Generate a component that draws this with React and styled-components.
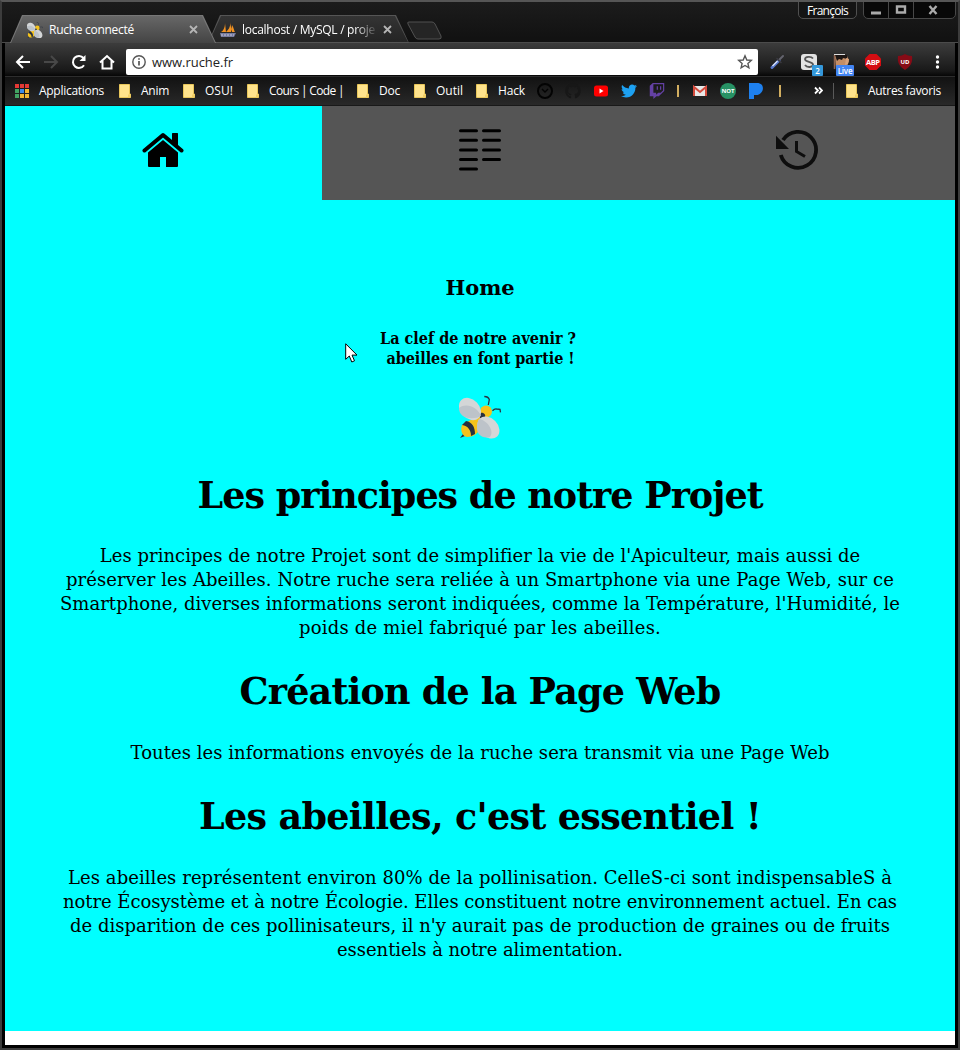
import React, { useLayoutEffect, useRef, useState } from "react";
import styled, { createGlobalStyle } from "styled-components";
import { FaTwitter, FaTwitch, FaGithub } from "react-icons/fa";

const GlobalStyle = createGlobalStyle`
  * { box-sizing: border-box; }
  body { margin: 0; background: #000; }
`;

const Window = styled.div`
  position: relative;
  width: 960px;
  height: 1050px;
  display: flex;
  flex-direction: column;
  padding: 0 3px 3px;
  background: #000;
  border: 2px solid #3c3c3c;
  border-top-color: #565656;
  font-family: "Open Sans", "Noto Sans", sans-serif;
  font-size: 12px;
  color: #fff;
  overflow: hidden;
`;

const Fitted = styled.span`
  display: inline-block;
  white-space: pre;
  flex: none;
`;

/* Spreads or tightens the letters so that the text fills the given width. */
function Fit({ width, children }) {
  const ref = useRef(null);
  const [spacing, setSpacing] = useState(0);
  useLayoutEffect(() => {
    const natural = ref.current.getBoundingClientRect().width;
    setSpacing((width - natural) / children.length);
  }, [width, children]);
  return (
    <Fitted ref={ref} style={{ letterSpacing: spacing }}>
      {children}
    </Fitted>
  );
}

/* ---------- title bar ---------- */

const TitleBar = styled.div`
  height: 41px;
  flex: none;
  margin: 0 -3px;
  padding: 13px 0 0 8px;
  display: flex;
  background: linear-gradient(#1c1c1c, #111);
  border-bottom: 1px solid #4b4b4b;
`;

const Tab = styled.div`
  position: relative;
  width: ${(p) => p.$width}px;
  height: 28px;
  flex: none;
  margin-left: ${(p) => p.$shift || 0}px;
  padding: 1px 0 0 ${(p) => p.$inset}px;
  display: flex;
  align-items: center;
  isolation: isolate;
  z-index: ${(p) => (p.$active ? 2 : 1)};
  &::before, &::after {
    content: "";
    position: absolute;
    z-index: -1;
    inset: 0;
    background: ${(p) => (p.$active ? "#777" : "#555")};
    clip-path: polygon(12px 0, calc(100% - 13px) 0, 100% 100%, 0 100%);
  }
  &::after {
    inset: 1px 1px ${(p) => (p.$active ? 0 : 1)}px;
    background: ${(p) => (p.$active ? "linear-gradient(#676767, #444)" : "linear-gradient(#343434, #242424)")};
  }
`;

const TabTitle = styled.div`
  width: ${(p) => p.$width}px;
  margin-left: 6px;
  line-height: 20px;
  ${(p) => p.$fade && "mask-image: linear-gradient(90deg, #000 84%, rgba(0, 0, 0, 0.1));"}
`;

const Close = styled.svg`
  width: 9px;
  height: 9px;
  flex: none;
  margin-left: ${(p) => p.$gap}px;
  stroke: #b5b5b5;
  stroke-width: 1.8;
`;

const NewTab = styled.svg`
  width: 36px;
  height: 19px;
  margin: 6px 0 0 -3px;
  fill: #252525;
  stroke: #515151;
`;

const UserBadge = styled.div`
  position: absolute;
  left: 796px;
  top: -1px;
  width: 59px;
  height: 18px;
  display: flex;
  justify-content: center;
  border: 1px solid #505050;
  border-radius: 0 0 5px 5px;
  background: #141414;
  line-height: 17px;
`;

const WindowButtons = styled.div`
  position: absolute;
  left: 861px;
  top: -1px;
  height: 18px;
  display: flex;
  border: 1px solid #484848;
  border-radius: 0 0 5px 5px;
  background: #080808;
  overflow: hidden;
`;

const WindowButton = styled.div`
  width: ${(p) => p.$width}px;
  display: flex;
  align-items: center;
  justify-content: center;
  padding-right: ${(p) => p.$trim || 1}px;
  & + & { border-left: 1px solid #484848; }
  svg { width: 12px; height: 12px; fill: none; stroke: #aaa; stroke-width: 2.4; }
`;

/* ---------- toolbar ---------- */

const Toolbar = styled.div`
  height: 33px;
  flex: none;
  display: flex;
  align-items: center;
  padding: 5px 9px 0 10px;
  background: linear-gradient(#3c3c3c, #181818 85%, #060606);
`;

const NavIcon = styled.svg`
  width: 16px;
  height: 16px;
  flex: none;
  margin-right: 12px;
  fill: none;
  stroke: ${(p) => (p.$dim ? "#484848" : "#fff")};
  stroke-width: 2;
`;

const AddressBar = styled.div`
  width: 632px;
  height: 26px;
  margin-left: -1px;
  padding: 0 6px;
  display: flex;
  align-items: center;
  border-radius: 2px;
  background: #fff;
  color: #222;
  font-size: 13px;
  flex: none;
`;

const InfoIcon = styled.svg`
  width: 14px;
  height: 14px;
  margin-right: 6px;
  fill: none;
  stroke: #555;
  stroke-width: 1.4;
`;

const StarIcon = styled.svg`
  width: 16px;
  height: 16px;
  margin-left: auto;
  margin-right: -1px;
  fill: none;
  stroke: #555;
  stroke-width: 1.4;
`;

const Extensions = styled.div`
  flex: 1;
  display: flex;
  align-items: center;
  justify-content: space-between;
  padding-left: 10px;
`;

const Extension = styled.div`
  position: relative;
  width: 18px;
  height: 18px;
  svg { display: block; width: 18px; height: 18px; }
`;

const Count = styled.span`
  position: absolute;
  left: ${(p) => p.$left}px;
  top: 12px;
  width: ${(p) => p.$width}px;
  height: 11px;
  border-radius: 1px;
  background: ${(p) => p.$color};
  font: 600 8px/11px "Open Sans", sans-serif;
  letter-spacing: -0.2px;
  text-align: center;
`;

/* ---------- bookmarks ---------- */

const Bookmarks = styled.div`
  height: 30px;
  flex: none;
  display: flex;
  align-items: center;
  padding-left: 10px;
  border-top: 1px solid #2d2d2d;
  border-bottom: 1px solid #191919;
  background: linear-gradient(#121212, #292929);
`;

const Bookmark = styled.div`
  width: ${(p) => p.$width}px;
  flex: none;
  display: flex;
  align-items: center;
  gap: 10px;
  line-height: 20px;
`;

const BookmarkIcon = styled.div`
  width: ${(p) => p.$width || 28}px;
  height: 16px;
  flex: none;
  display: flex;
  align-items: center;
  justify-content: center;
  color: ${(p) => p.$color};
  svg { width: 16px; height: 16px; }
`;

const Overflow = styled.div`
  width: 42px;
  height: 16px;
  flex: none;
  padding: 3px 0 0 23px;
  svg { display: block; width: 9px; height: 9px; fill: none; stroke: #fff; stroke-width: 1.8; }
`;

const FolderSvg = styled.svg`
  width: 12px;
  height: 14px;
  flex: none;
`;

const AppsGrid = styled.div`
  display: grid;
  grid-template-columns: repeat(3, 4px);
  grid-auto-rows: 4px;
  gap: 1px;
`;

const AppDot = styled.i`
  background: ${(p) => p.$color};
`;

const Bar = styled.i`
  width: 2px;
  height: 12px;
  background: #d2ae60;
`;

const Separator = styled.i`
  width: 1px;
  height: 16px;
  flex: none;
  margin-right: 12px;
  background: #5a5a5a;
`;

/* ---------- page ---------- */

const Page = styled.main`
  flex: 1;
  display: flex;
  flex-direction: column;
  background: #0ff;
  border-bottom: 14px solid #fff;
  color: #000;
  font-family: "DejaVu Serif", serif;
`;

const PageTabs = styled.nav`
  display: grid;
  grid-template-columns: 317px 1fr 1fr;
  height: 94px;
`;

const PageTab = styled.div`
  display: flex;
  justify-content: center;
  align-items: flex-start;
  padding: ${(p) => p.$top}px ${(p) => p.$trim || 0}px 0 0;
  background: ${(p) => (p.$active ? "#0ff" : "#555")};
  svg { width: 42px; height: 42px; display: block; }
`;

const Centered = styled.div`
  display: flex;
  flex-direction: column;
  align-items: center;
`;

const SmallTitle = styled(Centered)`
  margin-top: 73px;
  font-size: 21px;
  font-weight: 700;
  line-height: 30px;
`;

const Motto = styled(Centered)`
  margin: 26px 4px 0 0;
  font-family: "DejaVu Serif Condensed", "DejaVu Serif", serif;
  font-size: 16px;
  font-weight: 700;
  line-height: 20px;
`;

const MottoLine = styled.div`
  height: 20px;
  margin-left: ${(p) => p.$indent || 0}px;
`;

const BeePicture = styled(Centered)`
  margin-top: 27px;
  svg { width: 42px; height: 42px; overflow: visible; }
`;

const Heading = styled(Centered).attrs({ as: "h1" })`
  height: 48px;
  margin: ${(p) => p.$top}px 0 0;
  font-size: 36.5px;
  font-weight: 700;
  line-height: 48px;
`;

const Paragraph = styled(Centered).attrs({ as: "p" })`
  margin: ${(p) => p.$top}px 0 0;
  font-size: 18px;
  line-height: 24px;
`;

const Pointer = styled.svg`
  position: absolute;
  left: 343px;
  top: 341px;
  width: 13px;
  height: 20px;
`;

const Bee = (props) => (
  <svg viewBox="0 0 42 42" {...props}>
    <path d="M29.300 9l1-5.500q-1-3-5-3M33.500 14.700q2-2 4-1.700l3.500.300.5 3" fill="none" stroke="#283040" strokeWidth="1.300" />
    <path d="M1 42l3-4 2 2z" fill="#263040" />
    <path d="M17 21L3 29c-2 5 0 11 5 12 6 0 11-3 13-9l9-14-7-2z" fill="#f5c21b" />
    <path d="M7 25c6 1 9 6 9 13l-4 2c0-6-3-10-9-11zM22 16l6 1-2 5-5 2z" fill="#27303f" />
    <circle cx="27" cy="15.500" r="6" fill="#f5c21b" />
    <path d="M21 17c3-1 6 1 5 4l-5 1z" fill="#27303f" />
    <ellipse cx="11" cy="13" rx="12.500" ry="9.500" transform="rotate(46 11 13)" fill="#d4d6d7" />
    <path d="M0 12c8-6 19 0 22 8-5 3-14 3-18 0-3-2-4-5-4-8z" fill="#bdc3c9" />
    <ellipse cx="29.500" cy="31.500" rx="12.500" ry="9.300" transform="rotate(46 29.5 31.5)" fill="#d4d6d7" />
    <path d="M20 23c8 1 16 12 11 18-7 2-14-2-13-11 0-3 1-5 2-7z" fill="#bdc3c9" />
  </svg>
);

const Folder = () => (
  <FolderSvg viewBox="0 0 12 14">
    <path d="M.5.5h10v9.5h1v3.5H.5z" fill="#ffe38c" stroke="#e8c65a" />
    <path d="M9 10.5h2.5v3H9z" fill="#f2cf66" />
  </FolderSvg>
);

const Cross = ({ gap }) => (
  <Close $gap={gap} viewBox="0 0 9 9"><path d="M1 1l7 7M8 1L1 8" /></Close>
);

const folders = [
  ["Anim", 64, 28], ["OSU!", 64, 28], ["Cours | Code |", 110, 75],
  ["Doc", 57, 21], ["Outil", 62, 27], ["Hack", 55, 27],
];
const dots = ["#e53935", "#e53935", "#e53935", "#43a463", "#3b8bea", "#f2b632", "#43a463", "#f2b632", "#f2b632"];

export default function App() {
  return (
    <Window>
      <GlobalStyle />
      <TitleBar>
        <Tab $active $width={206} $inset={17}>
          <Bee width="16" height="16" />
          <TabTitle $width={136}><Fit width={85}>Ruche connecté</Fit></TabTitle>
          <Cross gap={4} />
        </Tab>
        <Tab $width={201} $inset={12} $shift={-8}>
          <svg width="16" height="16" viewBox="0 0 16 16">
            <path d="M5 1C5 6 3 9 1 10h5zM10 0C11 5 8 8 6 10h6zM12 3c2 3 2 6 3 7h-4z" fill="#f29221" />
            <path d="M0 11h16l-2 4H1z" fill="#777b9e" />
            <path d="M1 13h13" stroke="#c5c7dc" strokeDasharray="2 1" />
          </svg>
          <TabTitle $width={134} $fade><Fit width={133}>localhost / MySQL / proje</Fit></TabTitle>
          <Cross gap={7} />
        </Tab>
        <NewTab viewBox="0 0 36 19"><path d="M3 1h23q2 0 3 2l6 12q1 3-2 3H12q-2 0-3-2L2 3q-1-2 1-2z" /></NewTab>
      </TitleBar>
      <UserBadge><Fit width={41}>François</Fit></UserBadge>
      <WindowButtons>
        <WindowButton $width={24}><svg viewBox="0 0 12 12"><path d="M1 9h10" strokeWidth="3" /></svg></WindowButton>
        <WindowButton $width={25}><svg viewBox="0 0 12 12"><path d="M2 2.500h8v6H2z" /></svg></WindowButton>
        <WindowButton $width={42} $trim={4}><svg viewBox="0 0 12 12"><path d="M2.500 2l7 8M9.500 2l-7 8" /></svg></WindowButton>
      </WindowButtons>

      <Toolbar>
        <NavIcon viewBox="0 0 16 16"><path d="M15 8H2M8 2L2 8l6 6" /></NavIcon>
        <NavIcon viewBox="0 0 16 16" $dim><path d="M1 8h13M8 2l6 6-6 6" /></NavIcon>
        <NavIcon viewBox="0 0 16 16"><path d="M13 11.2A6 6 0 1 1 12.5 4" /><path d="M14.5 1v6h-6z" fill="#fff" stroke="none" /></NavIcon>
        <NavIcon viewBox="0 0 16 16"><path d="M1 8.5L8 2l7 6.5M3.5 7v7.500h9V7" /></NavIcon>
        <AddressBar>
          <InfoIcon viewBox="0 0 14 14"><circle cx="7" cy="7" r="6.200" /><path d="M7 6v4.500M7 3.300v1.500" strokeWidth="1.700" /></InfoIcon>
          <Fit width={81}>www.ruche.fr</Fit>
          <StarIcon viewBox="0 0 16 16"><path d="M8 1.800l1.800 4.200 4.500.400-3.400 3 1 4.400L8 11.500l-3.900 2.300 1-4.400-3.400-3 4.500-.400z" /></StarIcon>
        </AddressBar>
        <Extensions>
          <Extension>
            <svg viewBox="0 0 18 18">
              <path d="M4 14.500l7-7" stroke="#5575c9" strokeWidth="3" strokeLinecap="round" />
              <path d="M4.500 13l5-5" stroke="#dbe4fa" strokeWidth="1.200" />
              <path d="M11 7l4-4" stroke="#64646e" strokeWidth="2" strokeLinecap="round" />
              <path d="M9 5.500l4 4" stroke="#3b3b42" strokeWidth="1.500" strokeLinecap="round" />
            </svg>
          </Extension>
          <Extension>
            <svg viewBox="0 0 18 18">
              <rect x="1" y="1" width="16" height="16" rx="3" fill="#e2e2e2" />
              <path d="M13 5.500C11 3 5 3.400 5 6.300S13 8.500 13 11.500 7 15 5 12" fill="none" stroke="#555" strokeWidth="1.800" />
            </svg>
            <Count $left={12} $width={11} $color="#3498db">2</Count>
          </Extension>
          <Extension>
            <svg viewBox="0 0 18 18">
              <path d="M3 3h12l2 5-3 8H4z" fill="#c58e66" />
              <path d="M3 2h12v4l-4-1-1 2-3-1-2 2z" fill="#1d1614" />
              <path d="M2 1.500h11" stroke="#ddd" />
              <path d="M14 5l3 1-1 5-3 1z" fill="#d9a37c" />
              <path d="M2.500 2v14" stroke="#8d6450" strokeWidth="1.500" />
            </svg>
            <Count $left={4} $width={18} $color="#4285f4">Live</Count>
          </Extension>
          <Extension>
            <svg viewBox="0 0 18 18">
              <path d="M5.500 1h7L17 5.500v7L12.500 17h-7L1 12.500v-7z" fill="#d40d12" />
              <text x="9" y="11.800" fontSize="7.500" fontWeight="700" fill="#fff" textAnchor="middle" textLength="14">ABP</text>
            </svg>
          </Extension>
          <Extension>
            <svg viewBox="0 0 18 18">
              <path d="M9 1c2 1 4 2 7 2 1 7-2 11-7 14C4 14 1 10 2 3c3 0 5-1 7-2z" fill="#860b16" />
              <text x="9" y="10.500" fontSize="6" fontWeight="700" fill="#fff" textAnchor="middle">UD</text>
            </svg>
          </Extension>
          <Extension>
            <svg viewBox="0 0 18 18" fill="#fff"><circle cx="9.500" cy="4" r="1.700" /><circle cx="9.500" cy="9" r="1.700" /><circle cx="9.500" cy="14" r="1.700" /></svg>
          </Extension>
        </Extensions>
      </Toolbar>

      <Bookmarks>
        <Bookmark $width={104}>
          <AppsGrid>{dots.map((c, i) => <AppDot key={i} $color={c} />)}</AppsGrid>
          <Fit width={65}>Applications</Fit>
        </Bookmark>
        {folders.map(([name, width, text]) => (
          <Bookmark key={name} $width={width}><Folder /><Fit width={text}>{name}</Fit></Bookmark>
        ))}
        <BookmarkIcon>
          <svg viewBox="0 0 16 16" fill="none" stroke="#030303" strokeWidth="2"><circle cx="8" cy="8" r="7" /><path d="M5 6l3 3 3-3" strokeWidth="1.400" /></svg>
        </BookmarkIcon>
        <BookmarkIcon $color="#171717"><FaGithub /></BookmarkIcon>
        <BookmarkIcon>
          <svg viewBox="0 0 16 16"><rect x="1" y="2.500" width="14" height="11" rx="2.500" fill="#f00" /><path d="M6.500 5.500l4 2.500-4 2.500z" fill="#fff" /></svg>
        </BookmarkIcon>
        <BookmarkIcon $color="#1da1f2"><FaTwitter /></BookmarkIcon>
        <BookmarkIcon $color="#6441a4" $width={27}><FaTwitch /></BookmarkIcon>
        <BookmarkIcon $width={16}><Bar /></BookmarkIcon>
        <BookmarkIcon $width={28}>
          <svg viewBox="0 0 16 16"><path d="M1 3h14v10H1z" fill="#e8e8e8" /><path d="M2 13V4l6 5 6-5v9" fill="none" stroke="#d54b3d" strokeWidth="2" /></svg>
        </BookmarkIcon>
        <BookmarkIcon>
          <svg viewBox="0 0 16 16"><circle cx="8" cy="8" r="8" fill="#279264" /><text x="8" y="10.300" fontSize="6" fontWeight="700" fill="#fff" textAnchor="middle">NOT</text></svg>
        </BookmarkIcon>
        <BookmarkIcon $width={27}>
          <svg viewBox="0 0 16 16"><path d="M1 0h8c9 0 7 12-1 12H6v4H1z" fill="#1e80ee" /></svg>
        </BookmarkIcon>
        <BookmarkIcon $width={22}><Bar /></BookmarkIcon>
        <Overflow>
          <svg viewBox="0 0 9 9"><path d="M1 1.500l3 3-3 3M5 1.500l3 3-3 3" /></svg>
        </Overflow>
        <Separator />
        <Bookmark $width={100}><Folder /><Fit width={73}>Autres favoris</Fit></Bookmark>
      </Bookmarks>

      <Page>
        <PageTabs>
          <PageTab $active $top={24} $trim={2}>
            <svg viewBox="0 0 42 42">
              <path d="M30 3.500q0-.5.500-.5h5q.5 0 .5.500V17l-6-5z" />
              <path d="M2.500 20.500L21 5l18.500 15.500" fill="none" stroke="#000" strokeWidth="4" strokeLinecap="round" strokeLinejoin="round" />
              <path d="M6 22.500L21 10l15 12.500V36q0 1-1 1H24V27h-6v10H7q-1 0-1-1z" />
            </svg>
          </PageTab>
          <PageTab $top={23}>
            <svg viewBox="0 0 42 42">
              <path d="M1.500 1.700h16M24.500 1.700h16M1.500 11.300h16M24.500 11.300h16M1.500 20.900h16M24.500 20.900h16M1.500 30.500h16M24.500 30.500h16M1.500 40.100h16" stroke="#000" strokeWidth="3" strokeLinecap="round" />
            </svg>
          </PageTab>
          <PageTab $top={23}>
            <svg viewBox="0 0 42 42">
              <path d="M7 11A18 18 0 1 1 4.800 26" fill="none" stroke="#0e0e0e" strokeWidth="3.800" />
              <path d="M0 6.700V20h13z" fill="#0e0e0e" />
              <path d="M20.500 12v10.500l8.500 5" fill="none" stroke="#0e0e0e" strokeWidth="3" />
            </svg>
          </PageTab>
        </PageTabs>
        <SmallTitle><Fit width={69}>Home</Fit></SmallTitle>
        <Motto>
          <MottoLine><Fit width={196}>La clef de notre avenir ?</Fit></MottoLine>
          <MottoLine $indent={5}><Fit width={188}>abeilles en font partie !</Fit></MottoLine>
        </Motto>
        <BeePicture><Bee /></BeePicture>
        <Heading $top={34}><Fit width={565}>Les principes de notre Projet</Fit></Heading>
        <Paragraph $top={24}>
          <Fit width={760}>Les principes de notre Projet sont de simplifier la vie de l'Apiculteur, mais aussi de</Fit>
          <Fit width={828}>préserver les Abeilles. Notre ruche sera reliée à un Smartphone via une Page Web, sur ce</Fit>
          <Fit width={840}>Smartphone, diverses informations seront indiquées, comme la Température, l'Humidité, le</Fit>
          <Fit width={362}>poids de miel fabriqué par les abeilles.</Fit>
        </Paragraph>
        <Heading $top={28}><Fit width={481}>Création de la Page Web</Fit></Heading>
        <Paragraph $top={25}>
          <Fit width={699}>Toutes les informations envoyés de la ruche sera transmit via une Page Web</Fit>
        </Paragraph>
        <Heading $top={28}><Fit width={562}>Les abeilles, c'est essentiel !</Fit></Heading>
        <Paragraph $top={25}>
          <Fit width={824}>Les abeilles représentent environ 80% de la pollinisation. CelleS-ci sont indispensableS à</Fit>
          <Fit width={834}>notre Écosystème et à notre Écologie. Elles constituent notre environnement actuel. En cas</Fit>
          <Fit width={820}>de disparition de ces pollinisateurs, il n'y aurait pas de production de graines ou de fruits</Fit>
          <Fit width={286}>essentiels à notre alimentation.</Fit>
        </Paragraph>
      </Page>
      <Pointer viewBox="0 0 13 20"><path d="M.7.800v15.500l3.600-3.300 2.500 6 2.700-1.200-2.500-5.700h5z" fill="#fff" stroke="#000" /></Pointer>
    </Window>
  );
}
